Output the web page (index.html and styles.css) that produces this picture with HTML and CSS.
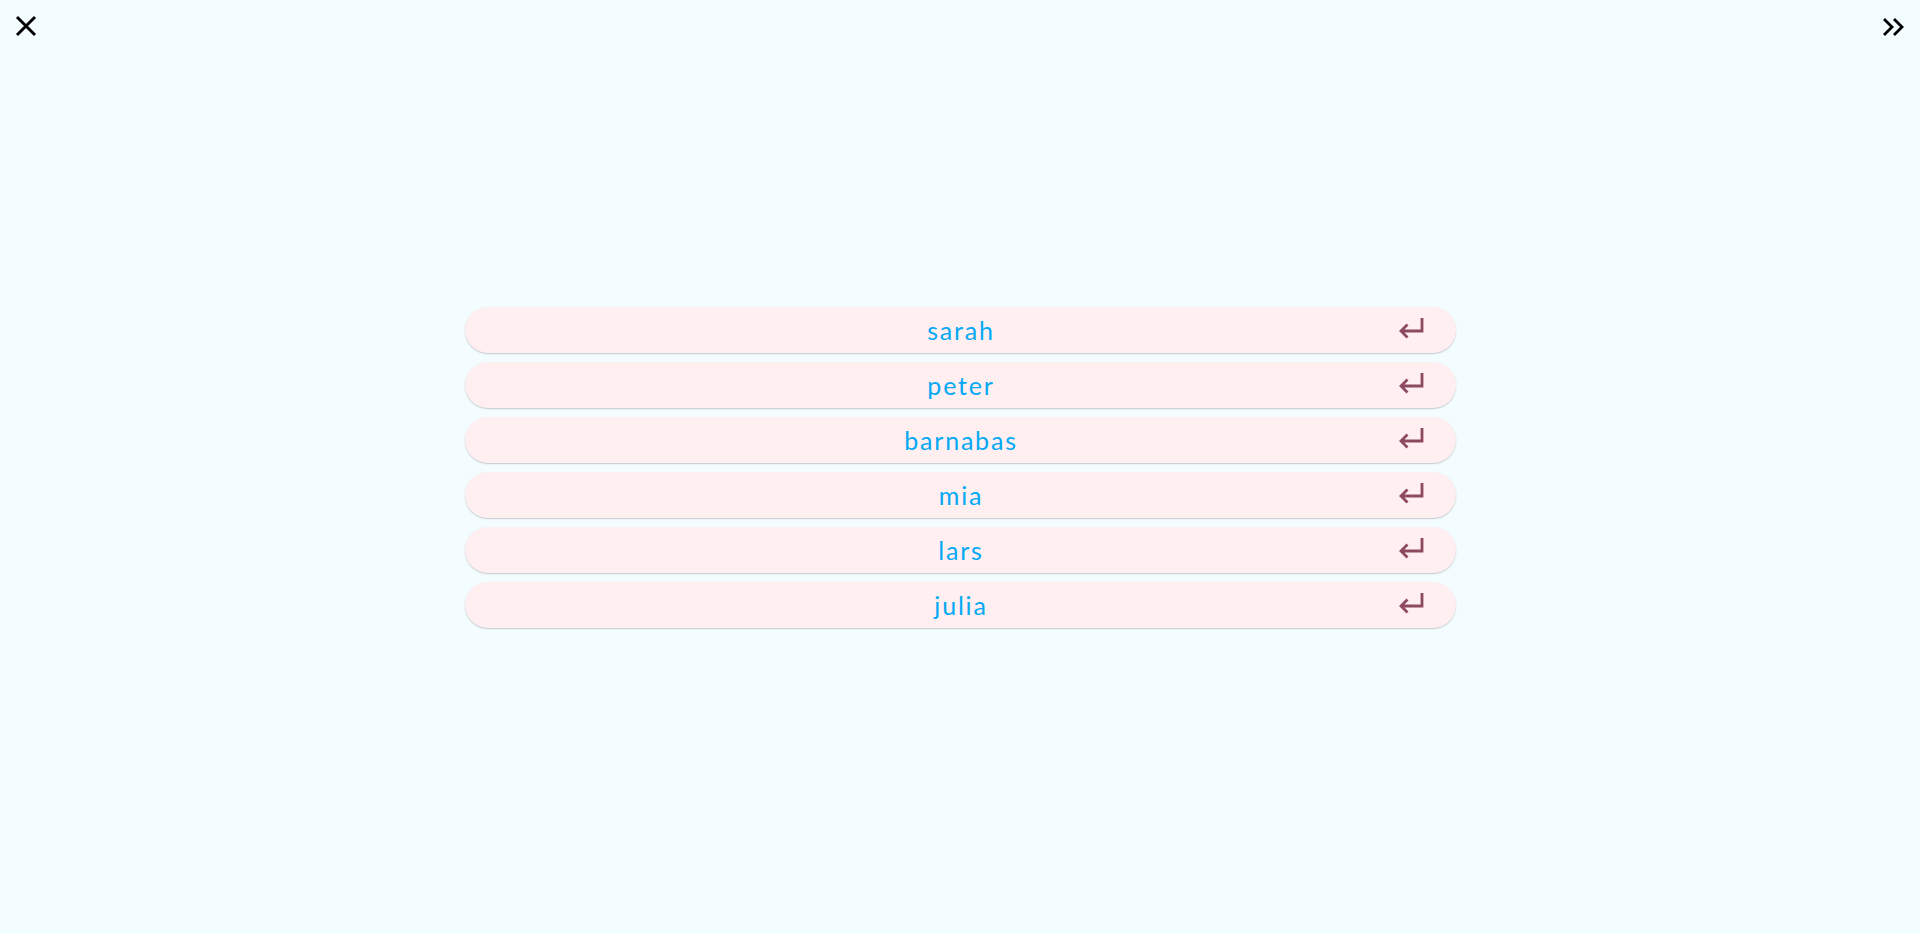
FILE: index.html
```html
<!DOCTYPE html>
<html>
<head>
<meta charset="utf-8">
<link rel="stylesheet" href="styles.css">
</head>
<body>
<div class="page">
  <button class="corner close" aria-label="close">
    <svg width="24" height="24" viewBox="0 0 24 24"><path d="M3 3 L21 21 M21 3 L3 21" stroke="#000" stroke-width="3" fill="none"/></svg>
  </button>
  <button class="corner skip" aria-label="skip">
    <svg width="24" height="24" viewBox="0 0 24 24"><path d="M4 4 L12 12 L4 20 M14 4 L22 12 L14 20" stroke="#000" stroke-width="2.8" fill="none"/></svg>
  </button>
  <ul class="list">
    <li class="row"><span class="name">sarah</span><svg class="ret" width="26" height="24" viewBox="0 0 26 24"><path d="M24 2 V15 H3 M9.5 8.5 L3 15 L9.5 21.5" stroke="#8d4960" stroke-width="2.8" fill="none"/></svg></li>
    <li class="row"><span class="name">peter</span><svg class="ret" width="26" height="24" viewBox="0 0 26 24"><path d="M24 2 V15 H3 M9.5 8.5 L3 15 L9.5 21.5" stroke="#8d4960" stroke-width="2.8" fill="none"/></svg></li>
    <li class="row"><span class="name">barnabas</span><svg class="ret" width="26" height="24" viewBox="0 0 26 24"><path d="M24 2 V15 H3 M9.5 8.5 L3 15 L9.5 21.5" stroke="#8d4960" stroke-width="2.8" fill="none"/></svg></li>
    <li class="row"><span class="name">mia</span><svg class="ret" width="26" height="24" viewBox="0 0 26 24"><path d="M24 2 V15 H3 M9.5 8.5 L3 15 L9.5 21.5" stroke="#8d4960" stroke-width="2.8" fill="none"/></svg></li>
    <li class="row"><span class="name">lars</span><svg class="ret" width="26" height="24" viewBox="0 0 26 24"><path d="M24 2 V15 H3 M9.5 8.5 L3 15 L9.5 21.5" stroke="#8d4960" stroke-width="2.8" fill="none"/></svg></li>
    <li class="row"><span class="name">julia</span><svg class="ret" width="26" height="24" viewBox="0 0 26 24"><path d="M24 2 V15 H3 M9.5 8.5 L3 15 L9.5 21.5" stroke="#8d4960" stroke-width="2.8" fill="none"/></svg></li>
  </ul>
</div>
</body>
</html>
```
FILE: styles.css
```css
html, body {
  margin: 0;
  padding: 0;
  background: #f3fcff;
  font-family: "Lato", "Noto Sans", sans-serif;
}
.page {
  position: relative;
  height: 934px;
  display: flex;
  align-items: center;
  justify-content: center;
}
.corner {
  position: absolute;
  width: 24px;
  height: 24px;
  padding: 0;
  border: none;
  background: none;
  display: flex;
}
.close { left: 14px; top: 14px; }
.skip { right: 16px; top: 15px; }
.corner svg { width: 24px; height: 24px; }
.list {
  list-style: none;
  margin: 0;
  padding: 0;
  width: 991px;
  display: flex;
  flex-direction: column;
  gap: 9px;
}
.row {
  position: relative;
  height: 46px;
  border-radius: 23px;
  background: #ffeff0;
  box-shadow: 0 1px 1.5px rgba(0, 0, 0, 0.2);
  display: flex;
  align-items: center;
  justify-content: center;
}
.name {
  color: #03a9f4;
  font-size: 25px;
  font-weight: 400;
  letter-spacing: 1.8px;
  padding-left: 2px;
}
.ret {
  position: absolute;
  right: 32px;
  top: 9px;
}
```
